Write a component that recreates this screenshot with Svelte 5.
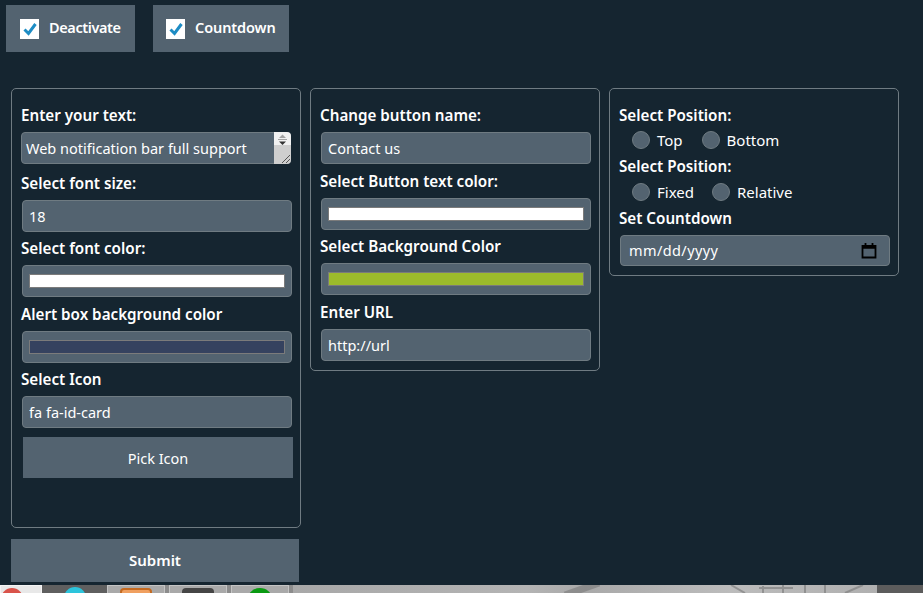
<script>
  const taskItems = [
    { cls: 'active', dot: 'red' },
    { cls: 'plain', dot: 'cyan' },
    { cls: 'tile', dot: 'orange' },
    { cls: 'tile', dot: 'slate' },
    { cls: 'tile', dot: 'green' }
  ];
</script>

<div class="page">
  <div class="toggles">
    <label class="toggle first">
      <span class="check"><svg width="16" height="16" viewBox="0 0 16 16"><path d="M2.500 8.500 6.500 12.500 13.500 3" fill="none" stroke="#1d8cc4" stroke-width="3"/></svg></span>
      <span class="tlabel">Deactivate</span>
    </label>
    <label class="toggle second">
      <span class="check"><svg width="16" height="16" viewBox="0 0 16 16"><path d="M2.500 8.500 6.500 12.500 13.500 3" fill="none" stroke="#1d8cc4" stroke-width="3"/></svg></span>
      <span class="tlabel">Countdown</span>
    </label>
  </div>

  <div class="columns">
    <section class="panel tall">
      <h4>Enter your text:</h4>
      <div class="area-wrap">
        <textarea class="field area" rows="1">Web notification bar full support</textarea>
        <div class="scroller">
          <svg width="17" height="32" viewBox="0 0 17 32">
            <rect width="17" height="13" fill="#f1f1f1"/>
            <rect y="13" width="17" height="19" fill="#cfcfcf"/>
            <path d="M8.500 2.500 12 6H5z" fill="#a3a3a3"/>
            <path d="M4 7.500h9" stroke="#a3a3a3"/>
            <path d="M8.500 13 12 9.500H5z" fill="#333"/>
            <path d="M8 31 16 23M12 31 16 27" stroke="#555" stroke-width="1"/>
          </svg>
        </div>
      </div>
      <h4 class="l2">Select font size:</h4>
      <input class="field shift" type="text" value="18" />
      <h4 class="l3a">Select font color:</h4>
      <div class="swatch shift"><span class="white"></span></div>
      <h4 class="l3">Alert box background color</h4>
      <div class="swatch shift"><span class="navy"></span></div>
      <h4 class="l3a">Select Icon</h4>
      <input class="field shift" type="text" value="fa fa-id-card" />
      <button class="pick">Pick Icon</button>
    </section>

    <section class="panel">
      <h4>Change button name:</h4>
      <input class="field shift" type="text" value="Contact us" />
      <h4 class="l2b">Select Button text color:</h4>
      <div class="swatch shift"><span class="white"></span></div>
      <h4 class="l3b">Select Background Color</h4>
      <div class="swatch shift"><span class="lime"></span></div>
      <h4 class="l3">Enter URL</h4>
      <input class="field shift" type="text" value="http://url" />
    </section>

    <section class="panel">
      <h4>Select Position:</h4>
      <div class="radios r1">
        <label><input type="radio" name="a" />Top</label>
        <label><input type="radio" name="a" />Bottom</label>
      </div>
      <h4 class="l4">Select Position:</h4>
      <div class="radios r2">
        <label><input type="radio" name="b" />Fixed</label>
        <label><input type="radio" name="b" />Relative</label>
      </div>
      <h4 class="l5">Set Countdown</h4>
      <div class="field date">
        <span>mm/dd/yyyy</span>
        <svg width="16" height="17" viewBox="0 0 16 17"><path d="M1.500 4h13v11.500h-13z" fill="none" stroke="#000" stroke-width="1.800"/><path d="M1.500 5.500h13" stroke="#000" stroke-width="2.500"/><path d="M4.500 1v3M11.500 1v3" stroke="#000" stroke-width="1.800"/></svg>
      </div>
    </section>
  </div>

  <button class="submit"><span>Submit</span></button>

  <div class="taskbar">
    {#each taskItems as t}
      <div class="task {t.cls}"><i class={t.dot}></i></div>
    {/each}
    <div class="wall">
      <svg width="587" height="8" viewBox="0 0 587 8">
        <path d="M272 10 306 -2" stroke="#7a7a7a" stroke-width="7" opacity=".6" fill="none"/>
        <path d="M438 0 452 8M470 8V1M466 3H500M490 8V0M512 8V0M532 8V0M552 8 570 0" stroke="#7c7c7c" stroke-width="2" opacity=".65" fill="none"/>
      </svg>
    </div>
    <div class="tray"></div>
  </div>
</div>

<style>
  :global(body) {
    margin: 0;
    background: #152530;
  }
  .page {
    width: 923px;
    height: 593px;
    overflow: hidden;
    background: #152530;
    color: #fff;
    font-family: "Noto Sans", "Open Sans", sans-serif;
    font-size: 15px;
    box-sizing: border-box;
    padding-top: 5px;
    display: flex;
    flex-direction: column;
  }
  .toggles {
    display: flex;
    padding-left: 6px;
    gap: 18px;
    height: 47px;
  }
  .toggle {
    background: #536370;
    display: flex;
    align-items: center;
    padding-left: 14px;
    font-weight: 600;
    font-size: 14.5px;
    box-sizing: border-box;
    height: 47px;
  }
  .tlabel {
    margin-bottom: 3px;
  }
  .first { width: 129px; gap: 10px; }
  .first .tlabel { letter-spacing: -0.4px; }
  .second { width: 136px; gap: 10px; padding-left: 13px; }
  .second .tlabel { letter-spacing: -0.1px; }
  .check {
    width: 19px;
    height: 20px;
    background: #fff;
    display: flex;
    align-items: center;
    justify-content: center;
  }
  .columns {
    display: flex;
    align-items: flex-start;
    gap: 9px;
    margin-top: 36px;
    padding-left: 11px;
  }
  .panel {
    width: 290px;
    box-sizing: border-box;
    border: 1px solid #6f7b82;
    border-radius: 5px;
    padding: 17px 9px 9px;
  }
  .tall { height: 440px; }
  h4 {
    margin: 0;
    font-size: 15.2px;
    line-height: 18px;
    height: 20px;
    font-weight: 600;
  }
  h4 + * { margin-top: 6px; }
  .l2 { margin-top: 10px; }
  .l2b { margin-top: 8px; }
  .l3 { margin-top: 8px; }
  .l3a { margin-top: 7px; }
  .l3b { margin-top: 7px; }
  .l4 { margin-top: 7px; height: 19px; }
  .l5 { margin-top: 7px; }
  .field {
    display: block;
    width: 270px;
    height: 32px;
    box-sizing: border-box;
    background: #536370;
    border: 1px solid #6f7b82;
    border-radius: 4px;
    color: #fff;
    font: 14.500px "Noto Sans", "Open Sans", sans-serif;
    padding: 0 6px;
    outline: none;
  }
  .shift { margin-left: 1px; }
  .area-wrap {
    position: relative;
    width: 270px;
    height: 32px;
  }
  .area {
    resize: none;
    overflow: hidden;
    line-height: 30px;
    padding-left: 4px;
  }
  .scroller {
    position: absolute;
    top: 0;
    right: 0;
    width: 17px;
    height: 32px;
    border-radius: 0 4px 4px 0;
    overflow: hidden;
    line-height: 0;
  }
  .swatch {
    width: 270px;
    height: 32px;
    box-sizing: border-box;
    background: #536370;
    border: 1px solid #6f7b82;
    border-radius: 4px;
    padding: 8px 6px;
  }
  .swatch span {
    display: block;
    height: 14px;
    box-sizing: border-box;
    border: 1px solid #7b7b7b;
  }
  .white { background: #fff; }
  .navy { background: #35425f; }
  .lime { background: #9cbb2b; }
  .pick {
    display: block;
    margin: 9px 0 0 2px;
    width: 270px;
    height: 41px;
    background: #536370;
    border: 0;
    color: #fff;
    font: 14.500px "Noto Sans", "Open Sans", sans-serif;
    padding: 0;
  }
  .radios {
    display: flex;
    gap: 18px;
    padding-left: 13px;
    height: 20px;
    align-items: center;
  }
  .r1 { margin-top: 4px; gap: 19px; }
  .r2 { margin-top: 6px; }
  .radios label {
    display: flex;
    align-items: center;
    gap: 7px;
    font-size: 15px;
  }
  .radios input {
    appearance: none;
    width: 18px;
    height: 18px;
    margin: 0;
    border-radius: 50%;
    background: #536370;
    border: 1px solid #6f7b82;
    box-sizing: border-box;
  }
  .date {
    margin: 6px 0 0 1px;
    height: 31px;
    display: flex;
    align-items: center;
    justify-content: space-between;
    padding: 0 12px 1px 8px;
    letter-spacing: 0.4px;
  }
  .submit {
    display: block;
    margin: 11px 0 0 11px;
    width: 288px;
    height: 43px;
    background: #536370;
    border: 0;
    color: #fff;
    font: 600 15px "Noto Sans", "Open Sans", sans-serif;
    padding: 0 0 2px;
  }
  .taskbar {
    margin-top: 3px;
    height: 8px;
    display: flex;
    background: #8c8c8c;
    overflow: hidden;
  }
  .task {
    box-sizing: border-box;
    display: flex;
    justify-content: center;
    flex: none;
  }
  .task i {
    display: block;
    width: 22px;
    height: 22px;
    border-radius: 50%;
    margin-top: 2px;
  }
  .active { width: 42px; background: #e8e8e8; border: 1px solid #f4f4f4; border-bottom: 0; justify-content: flex-start; }
  .plain { width: 65px; background: #5f5f5f; }
  .tile { width: 58px; margin-right: 4px; background: #a9a9a9; border: 1px solid #c4c4c4; border-bottom: 0; }
  .red { background: #d9534a; }
  .cyan { background: #2cc4dc; }
  .orange { background: #f0a060; border: 2px solid #c46a20; box-sizing: border-box; border-radius: 4px !important; width: 32px !important; }
  .slate { background: #454545; border-radius: 4px !important; width: 32px !important; }
  .green { background: #0a9a12; width: 24px !important; }
  .wall {
    flex: 1;
    line-height: 0;
    overflow: hidden;
    background: linear-gradient(90deg, #a8a8a8, #b4b4b4 40%, #a9a9a9 50%, #bcbcbc 75%, #b0b0b0);
  }
  .tray { width: 46px; background: #5c5c5c; flex: none; }
</style>
